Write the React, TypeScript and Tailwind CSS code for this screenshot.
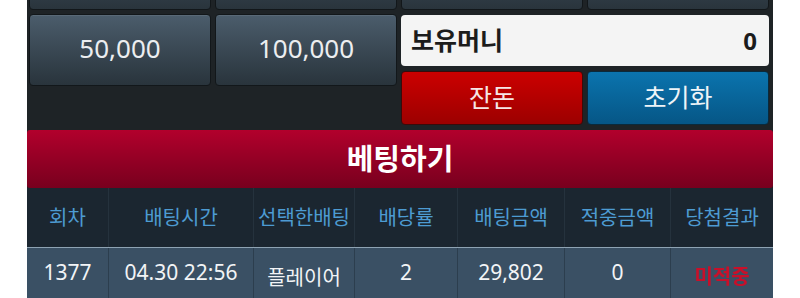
const columns = [
  "회차",
  "배팅시간",
  "선택한배팅",
  "배당률",
  "배팅금액",
  "적중금액",
  "당첨결과",
];

const row = [
  { v: "1377" },
  { v: "04.30 22:56" },
  { v: "플레이어", lower: true },
  { v: "2" },
  { v: "29,802" },
  { v: "0" },
];

function ChipButton({ label }: { label?: string }) {
  return (
    <button
      type="button"
      className="h-[72px] rounded-[4px] border border-[#12171a] bg-gradient-to-b from-[#4b5d6c] to-[#29343c] pb-[4px] text-[26px] text-[#eceef0] shadow-[inset_0_1px_0_rgba(255,255,255,0.08)]"
    >
      {label}
    </button>
  );
}

export default function App() {
  return (
    <main className="min-h-screen bg-white font-['Noto_Sans','Noto_Sans_CJK_KR',sans-serif]">
      <div className="mx-[27px] bg-[#1e2326]">
        {/* top row is scrolled above the window */}
        <div className="-mt-[62px] grid grid-cols-4 gap-[4px] pl-[2px] pr-[4px]">
          <ChipButton />
          <ChipButton />
          <ChipButton />
          <ChipButton />
          <ChipButton label="50,000" />
          <ChipButton label="100,000" />
          <div className="col-span-2 grid grid-cols-2 gap-x-[4px]">
            <div className="col-span-2 mt-[1px] flex h-[51px] items-center justify-between rounded-[4px] bg-[#f4f4f4] pl-[10px] pr-[12px] text-[#1c1c1c]">
              <span className="text-[25px] font-bold">보유머니</span>
              <span className="text-[24px] font-bold">0</span>
            </div>
            <button
              type="button"
              className="mt-[5px] h-[54px] rounded-[4px] border border-[#3a0a0a] bg-gradient-to-b from-[#cc0000] to-[#9c0000] text-[25px] text-[#f6e6e6]"
            >
              잔돈
            </button>
            <button
              type="button"
              className="mt-[5px] h-[54px] rounded-[4px] border border-[#0a2a3c] bg-gradient-to-b from-[#0b74ae] to-[#065686] text-[25px] text-[#eef4f8]"
            >
              초기화
            </button>
          </div>
        </div>

        <div className="mt-[5px] flex h-[58px] items-center justify-center rounded-[3px] bg-gradient-to-b from-[#b2002c] to-[#78001e] text-[29px] font-bold text-white">
          베팅하기
        </div>

        <div className="grid grid-cols-[81px_145px_101px_103px_107px_106px_103px]">
          {columns.map((c, i) => (
            <div
              key={c}
              className={`flex h-[59px] items-center justify-center bg-[#1b2630] text-[20px] text-[#4d9bd2] ${
                i > 0 ? "border-l border-[#25323d]" : ""
              }`}
            >
              {c}
            </div>
          ))}
          <div className="col-span-7 h-px bg-[#8ea3b3]" />
          {row.map((cell, i) => (
            <div
              key={i}
              className={`flex h-[52px] items-center justify-center bg-[#3a5064] text-[#f2f4f6] ${
                cell.lower ? "pt-[8px] text-[20px]" : "pb-[2px] text-[21px]"
              } ${i > 0 ? "border-l border-[#2c3e4e]" : ""}`}
            >
              {cell.v}
            </div>
          ))}
          <div className="flex h-[52px] items-center justify-center border-l border-[#2c3e4e] bg-[#3a5064] pt-[6px]">
            <span className="text-[20px] font-bold text-[#c8102a] blur-[0.6px]">
              미적중
            </span>
          </div>
        </div>
      </div>
    </main>
  );
}
